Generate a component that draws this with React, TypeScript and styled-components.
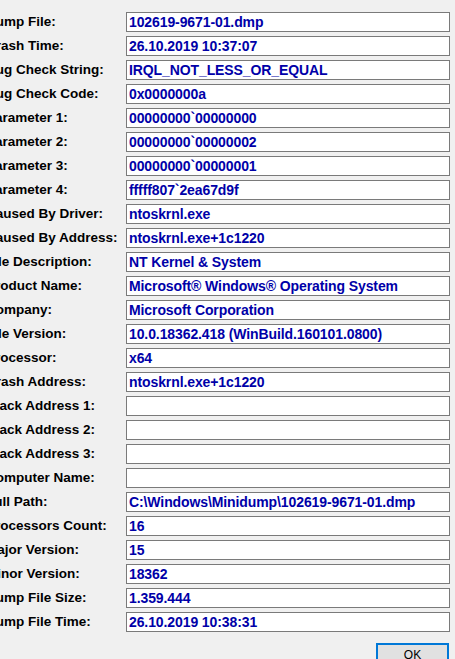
import { Fragment } from 'react'
import styled, { createGlobalStyle } from 'styled-components'

const GlobalStyle = createGlobalStyle`
    html, body {
        margin: 0;
        padding: 0;
        background: #f0f0f0;
        overflow: hidden;
    }
`

const Dialog = styled.div`
    width: 455px;
    height: 659px;
    overflow: hidden;
    background: #f0f0f0;
    font-family: "Liberation Sans", Arial, sans-serif;
`

const Fields = styled.div`
    display: grid;
    grid-template-columns: 140px 324px;
    grid-auto-rows: 20px;
    row-gap: 4px;
    margin-left: -14px;
    padding-top: 12px;
`

const Label = styled.div`
    font-size: 13.5px;
    font-weight: bold;
    color: #000;
    line-height: 20px;
    white-space: nowrap;
`

const Value = styled.div`
    box-sizing: border-box;
    height: 20px;
    border: 1px solid #7a7a7a;
    background: #fff;
    padding-left: 2px;
    font-size: 14px;
    letter-spacing: -0.1px;
    font-weight: bold;
    line-height: 18px;
    color: #0000a8;
    white-space: nowrap;
    overflow: hidden;
`

const Footer = styled.div`
    display: flex;
    justify-content: flex-end;
    padding: 11px 6px 0 0;
`

const OkButton = styled.button`
    width: 73px;
    height: 24px;
    box-sizing: border-box;
    border: 2px solid #0078d7;
    background: #e1e1e1;
    font-family: "Liberation Sans", Arial, sans-serif;
    font-size: 12px;
    color: #000;
    padding: 0;
`

const rows: [string, string][] = [
    ['Dump File:', '102619-9671-01.dmp'],
    ['Crash Time:', '26.10.2019 10:37:07'],
    ['Bug Check String:', 'IRQL_NOT_LESS_OR_EQUAL'],
    ['Bug Check Code:', '0x0000000a'],
    ['Parameter 1:', '00000000`00000000'],
    ['Parameter 2:', '00000000`00000002'],
    ['Parameter 3:', '00000000`00000001'],
    ['Parameter 4:', 'fffff807`2ea67d9f'],
    ['Caused By Driver:', 'ntoskrnl.exe'],
    ['Caused By Address:', 'ntoskrnl.exe+1c1220'],
    ['File Description:', 'NT Kernel & System'],
    ['Product Name:', 'Microsoft® Windows® Operating System'],
    ['Company:', 'Microsoft Corporation'],
    ['File Version:', '10.0.18362.418 (WinBuild.160101.0800)'],
    ['Processor:', 'x64'],
    ['Crash Address:', 'ntoskrnl.exe+1c1220'],
    ['Stack Address 1:', ''],
    ['Stack Address 2:', ''],
    ['Stack Address 3:', ''],
    ['Computer Name:', ''],
    ['Full Path:', 'C:\\Windows\\Minidump\\102619-9671-01.dmp'],
    ['Processors Count:', '16'],
    ['Major Version:', '15'],
    ['Minor Version:', '18362'],
    ['Dump File Size:', '1.359.444'],
    ['Dump File Time:', '26.10.2019 10:38:31'],
]

const App = () => {
    return (
        <Dialog>
            <GlobalStyle />
            <Fields>
                {rows.map(([label, value]) => (
                    <Fragment key={label}>
                        <Label>{label}</Label>
                        <Value>{value}</Value>
                    </Fragment>
                ))}
            </Fields>
            <Footer>
                <OkButton>OK</OkButton>
            </Footer>
        </Dialog>
    )
}

export default App
